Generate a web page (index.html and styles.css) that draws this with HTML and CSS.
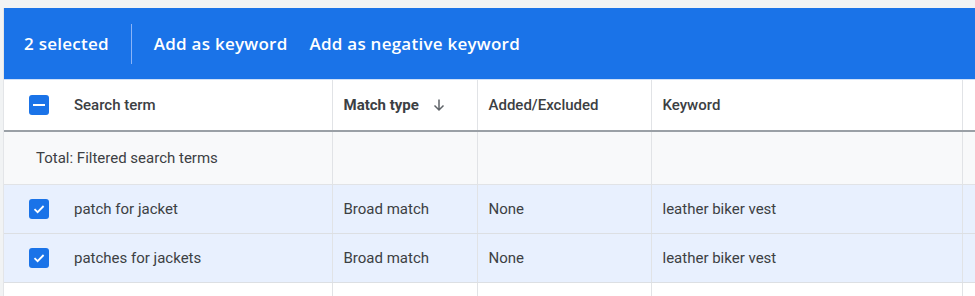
FILE: index.html
```html
<!DOCTYPE html>
<html lang="en">
<head>
    <meta charset="UTF-8">
    <title>Search terms</title>
    <link rel="stylesheet" href="styles.css">
</head>
<body>
    <div class="panel">
        <div class="action-bar">
            <span class="count">2 selected</span>
            <span class="sep"></span>
            <a href="#" class="action">Add as keyword</a>
            <a href="#" class="action">Add as negative keyword</a>
        </div>

        <table class="terms">
            <colgroup>
                <col class="c-term">
                <col class="c-match">
                <col class="c-added">
                <col class="c-keyword">
                <col>
            </colgroup>
            <thead>
                <tr>
                    <th>
                        <div class="term-cell">
                            <span class="box"><span class="dash"></span></span>
                            Search term
                        </div>
                    </th>
                    <th class="strong">
                        Match type
                        <svg class="sort" width="16" height="16" viewBox="0 0 16 16"><path d="M8 2.5v10M3.5 8.5 8 13l4.5-4.5" fill="none" stroke="#5f6368" stroke-width="1.5"/></svg>
                    </th>
                    <th>Added/Excluded</th>
                    <th>Keyword</th>
                    <th></th>
                </tr>
            </thead>
            <tbody>
                <tr class="total">
                    <td class="total-label">Total: Filtered search terms</td>
                    <td></td>
                    <td></td>
                    <td></td>
                    <td></td>
                </tr>
                <tr class="selected">
                    <td>
                        <div class="term-cell">
                            <span class="box"><svg width="14" height="14" viewBox="0 0 14 14"><path d="M2.5 7.2 5.6 10.2 11.6 4" fill="none" stroke="#fff" stroke-width="1.8"/></svg></span>
                            patch for jacket
                        </div>
                    </td>
                    <td>Broad match</td>
                    <td>None</td>
                    <td>leather biker vest</td>
                    <td></td>
                </tr>
                <tr class="selected">
                    <td>
                        <div class="term-cell">
                            <span class="box"><svg width="14" height="14" viewBox="0 0 14 14"><path d="M2.5 7.2 5.6 10.2 11.6 4" fill="none" stroke="#fff" stroke-width="1.8"/></svg></span>
                            patches for jackets
                        </div>
                    </td>
                    <td>Broad match</td>
                    <td>None</td>
                    <td>leather biker vest</td>
                    <td></td>
                </tr>
                <tr class="empty">
                    <td></td>
                    <td></td>
                    <td></td>
                    <td></td>
                    <td></td>
                </tr>
            </tbody>
        </table>
    </div>
</body>
</html>
```

FILE: styles.css
```css
body {
    margin: 0;
    background: #f1f3f4;
    font-family: Roboto, "Liberation Sans", sans-serif;
    color: #3c4043;
    overflow: hidden;
}

.panel {
    margin: 8px 0 0 3px;
    background: white;
    height: 288px;
    overflow: hidden;
    border-left: 1px solid #e3e5e8;
}

.action-bar {
    background: #1a73e8;
    height: 71px;
    display: flex;
    align-items: center;
    padding-left: 20px;
    font-family: "Open Sans", Roboto, sans-serif;
    font-weight: 600;
    font-size: 17px;
    letter-spacing: 0.25px;
    color: white;
    border-bottom: 1px solid #cfe0f8;
}

.action-bar .count {
    margin-right: 22px;
}

.action-bar .sep {
    width: 1px;
    height: 40px;
    background: #8ab4f8;
    margin-right: 22px;
}

.action-bar .action {
    color: white;
    text-decoration: none;
    margin-right: 22px;
}

.terms {
    border-collapse: collapse;
    width: 100%;
    table-layout: fixed;
    font-size: 15px;
}

.c-term { width: 328px; }
.c-match { width: 145px; }
.c-added { width: 174px; }
.c-keyword { width: 311px; }

.terms th,
.terms td {
    text-align: left;
    padding: 0 0 0 11px;
    border-left: 1px solid #e1e3e6;
    white-space: nowrap;
}

.terms th:first-child,
.terms td:first-child {
    border-left: none;
    padding-left: 25px;
}

.terms th {
    height: 50px;
    font-weight: 500;
    color: #3c4043;
    border-bottom: 2px solid #9aa0a6;
}

.terms th.strong {
    font-weight: 700;
    color: #3c4043;
}

.sort {
    vertical-align: -3px;
    margin-left: 8px;
}

.term-cell {
    display: flex;
    align-items: center;
    gap: 25px;
}

.box {
    width: 20px;
    height: 20px;
    border-radius: 3px;
    background: #1a73e8;
    display: flex;
    align-items: center;
    justify-content: center;
}

.box .dash {
    width: 12px;
    height: 2px;
    background: white;
}

.total td {
    height: 52px;
    background: #f8f9fa;
    border-bottom: 1px solid #e1e3e6;
}

.terms td.total-label {
    padding-left: 32px;
    overflow: visible;
}

.selected td {
    height: 48px;
    background: #e8f0fe;
    border-bottom: 1px solid #dcdfe3;
}

.empty td {
    height: 30px;
}
```
